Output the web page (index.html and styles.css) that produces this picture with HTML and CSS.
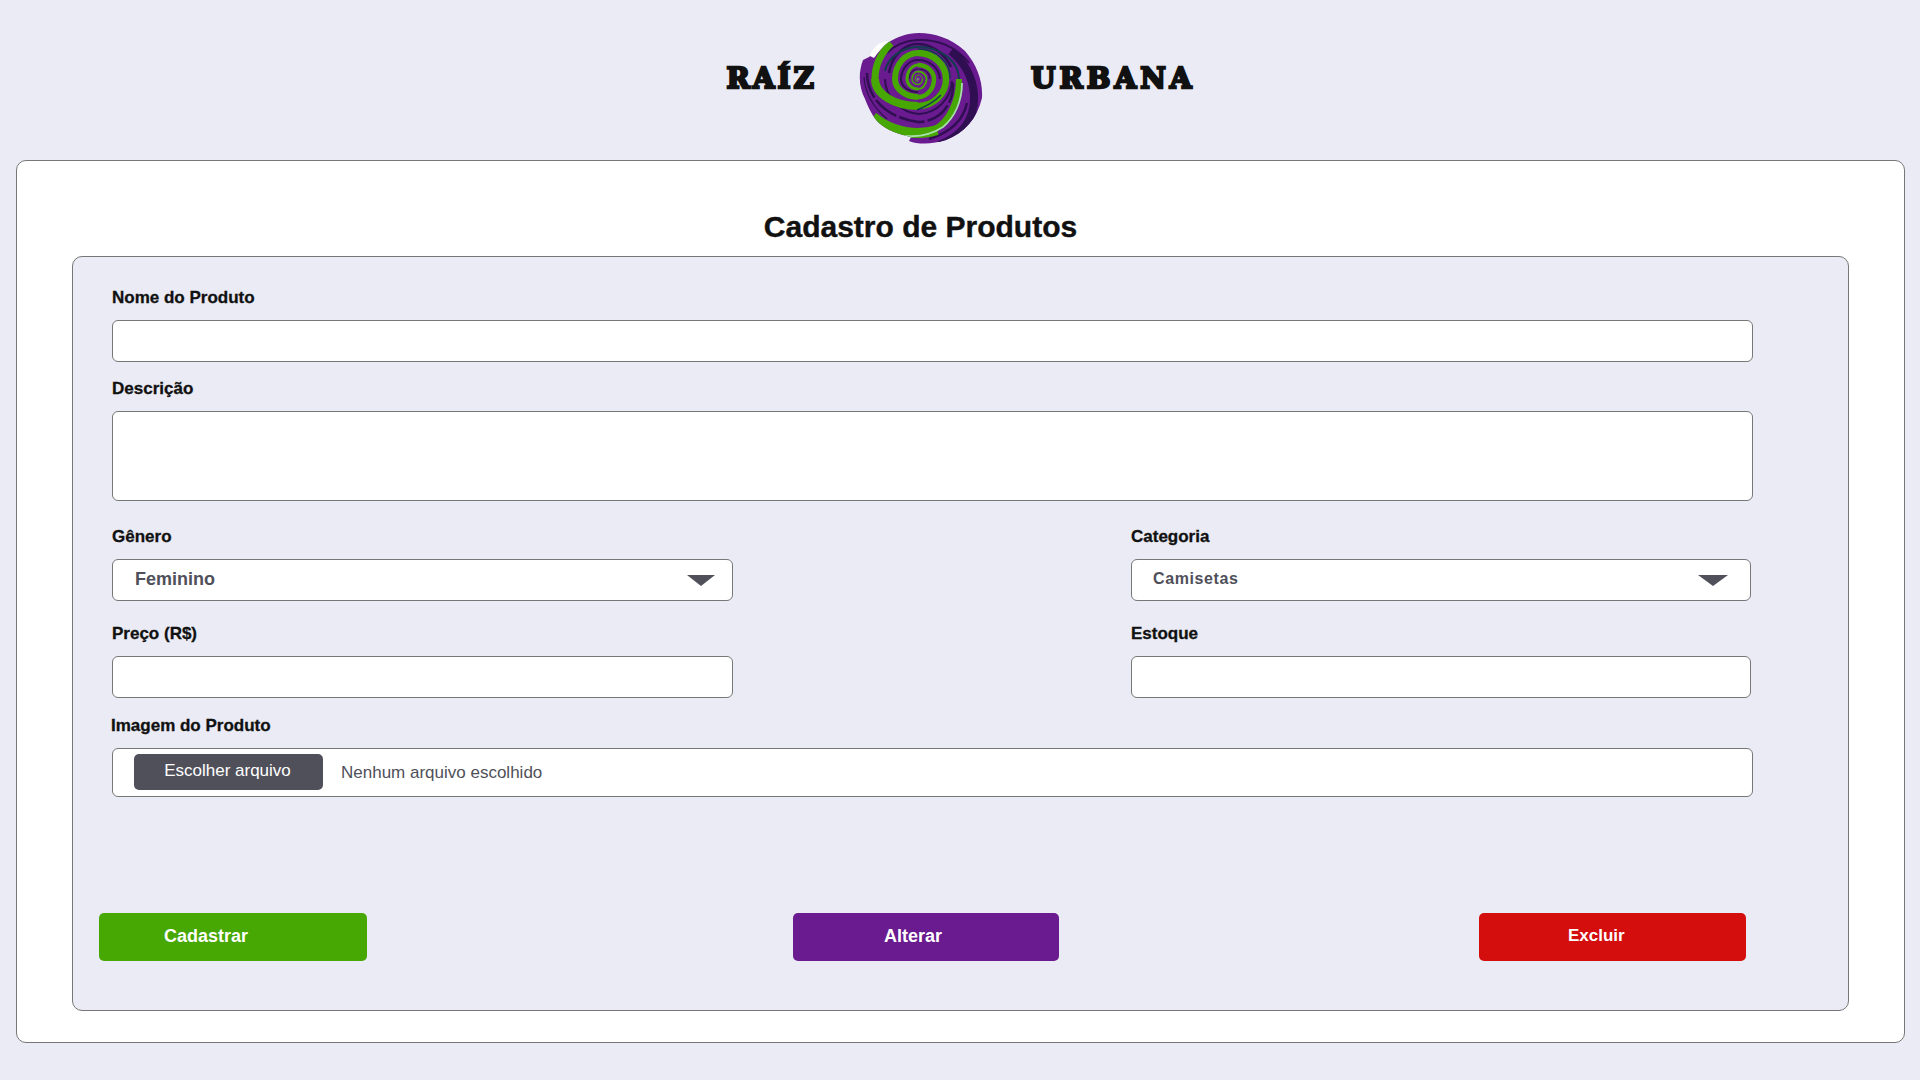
FILE: index.html
```html
<!DOCTYPE html>
<html lang="pt-BR">
<head>
    <meta charset="UTF-8">
    <title>Cadastro de Produtos</title>
    <link rel="stylesheet" href="styles.css">
</head>
<body>
    <header class="brand">
        <span class="brand-name">RAÍZ</span>
        <svg class="brand-logo" viewBox="0 0 124 112" width="124" height="112">
            <defs>
                <clipPath id="logoShape">
                    <path d="M4 27C-1 40 0 55 6 66C10 76 14 84 20 90C28 97 38 101 52 104L50 108C60 112 75 111 87 107C105 100 118 86 123 65C124 48 118 32 106 18C92 5 75 0 60 0C48 0 38 4 30 9L10 24Z"/>
                </clipPath>
            </defs>
            <g clip-path="url(#logoShape)" fill="none">
                <rect width="124" height="112" fill="#6a1b8f"/>
                <!-- dark streaks -->
                <g stroke="#2f0f52">
                    <path d="M80 112C106 102 116 84 115 62C114 46 106 30 92 18" stroke-width="8"/>
                    <path d="M70 106C90 100 104 88 108 70" stroke-width="2.5"/>
                    <path d="M110 30C96 12 76 6 58 7C44 8 34 14 28 20" stroke-width="2"/>
                    <path d="M92 34C84 18 70 10 56 11C42 13 32 26 30 40" stroke-width="2.5"/>
                    <path d="M8 40C8 62 24 84 59 89C80 89 95 72 94 50" stroke-width="2.5" stroke-dasharray="26 3"/>
                    <path d="M5 44C6 60 14 74 28 86" stroke-width="1.2"/>
                    <path d="M26 46C26 64 42 80 60 81C78 80 92 66 93 48" stroke-width="2"/>
                    <path d="M81 46A22 20 0 0 0 59 27A17 20 0 0 0 42 46A17 13 0 0 0 59 59" stroke-width="2"/>
                    <path d="M70 46A11 8 0 0 0 59 36A9 10 0 0 0 50 46" stroke-width="1.2"/>
                </g>
                <!-- outer green arm -->
                <path d="M14 84C24 92 40 100 59 100C66 100 72 99 78 97" stroke="#47a703" stroke-width="10"/>
                <path d="M74 97C90 90 100 68 100 46" stroke="#47a703" stroke-width="6"/>
                <path d="M22 96C40 106 66 106 84 94C96 84 103 68 103 50" stroke="#a6dfa8" stroke-width="1.8"/>
                <path d="M100 46A41 32 0 0 0 59 14A34 30 0 0 0 26 38" stroke="#123c4e" stroke-width="2"/>
                <!-- main green arm, thinner on the way in -->
                <g stroke="#47a703">
                    <path d="M32 10C22 20 16 32 16 46" stroke-width="7"/>
                    <path d="M16 46A43 27 0 0 0 59 73" stroke-width="8"/>
                    <path d="M59 73A28 27 0 0 0 87 46A28 26 0 0 0 59 20" stroke-width="6.5"/>
                    <path d="M59 20A23 26 0 0 0 36 46A23 18 0 0 0 59 64" stroke-width="6"/>
                    <path d="M59 64A16 18 0 0 0 75 46A16 14 0 0 0 59 32" stroke-width="4.5"/>
                    <path d="M59 32A11 14 0 0 0 48 46A11 10 0 0 0 59 56" stroke-width="3"/>
                    <path d="M59 56A8.5 10 0 0 0 67.5 46A8.5 7.5 0 0 0 59 38.5" stroke-width="2"/>
                    <path d="M59 38.5A6 7.5 0 0 0 53 46A6 5.5 0 0 0 59 51.5A4.5 5.5 0 0 0 63.5 46" stroke-width="1.4"/>
                    <path d="M63.5 46A4.5 4 0 0 0 59 42A3 4 0 0 0 56 46A3 2.5 0 0 0 59 48.5" stroke-width="1"/>
                </g>
                <path d="M91 46A32 28 0 0 0 59 16M82 62C74 70 66 74 58 77" stroke="#123c4e" stroke-width="1.4"/>
                <circle cx="59" cy="46" r="1.6" fill="#7a7a7a"/>
            </g>
            <path d="M11 23C13 15 20 9 29 8C25 13 20 18 15 25Z" fill="#ffffff"/>
        </svg>
        <span class="brand-name brand-name-wide">URBANA</span>
    </header>

    <main class="panel">
        <h1 class="panel-title">Cadastro de Produtos</h1>
        <form class="product-form">
            <label class="field-label" for="nome">Nome do Produto</label>
            <input class="field-input" id="nome" type="text">

            <label class="field-label label-desc" for="descricao">Descrição</label>
            <textarea class="field-input field-area" id="descricao"></textarea>

            <div class="two-cols">
                <div>
                    <label class="field-label" for="genero">Gênero</label>
                    <div class="select-wrap">
                        <select class="field-input field-select select-genero" id="genero">
                            <option>Feminino</option>
                            <option>Masculino</option>
                        </select>
                    </div>
                </div>
                <div>
                    <label class="field-label" for="categoria">Categoria</label>
                    <div class="select-wrap select-wrap-wide">
                        <select class="field-input field-select select-categoria" id="categoria">
                            <option>Camisetas</option>
                            <option>Calças</option>
                        </select>
                    </div>
                </div>
                <div>
                    <label class="field-label" for="preco">Preço (R$)</label>
                    <input class="field-input" id="preco" type="text">
                </div>
                <div>
                    <label class="field-label" for="estoque">Estoque</label>
                    <input class="field-input" id="estoque" type="text">
                </div>
            </div>

            <label class="field-label label-image">Imagem do Produto</label>
            <div class="file-box">
                <button class="file-button" type="button">Escolher arquivo</button>
                <span class="file-name">Nenhum arquivo escolhido</span>
            </div>

            <div class="actions">
                <button class="btn btn-add" type="button">Cadastrar</button>
                <button class="btn btn-edit" type="button">Alterar</button>
                <button class="btn btn-delete" type="button">Excluir</button>
            </div>
        </form>
    </main>
</body>
</html>
```

FILE: styles.css
```css
* {
    box-sizing: border-box;
}

body {
    margin: 0;
    height: 1080px;
    overflow: hidden;
    background: #eaebf4;
    color: #111;
    font-family: "Liberation Sans", Arial, sans-serif;
}

/* Header */
.brand {
    display: flex;
    justify-content: center;
    gap: 44px;
    height: 160px;
    padding-top: 33px;
    padding-left: 2px;
}
.brand-name {
    margin-top: 24px;
    font-family: "DejaVu Serif", serif;
    font-size: 28px;
    font-weight: bold;
    line-height: 44px;
    letter-spacing: 3px;
    color: #111;
    -webkit-text-stroke: 2.4px #111;
}
.brand-name-wide {
    letter-spacing: 4px;
}
.brand-logo {
    display: block;
    margin: 0 4px 0 -2px;
}

/* Cards */
.panel {
    height: 883px;
    margin: 0 15px 0 16px;
    padding: 42px 55px 0;
    background: #fff;
    border: 1px solid #777;
    border-radius: 10px;
}
.panel-title {
    margin: 0 80px 5px 0;
    font-size: 30px;
    line-height: 48px;
    text-align: center;
    -webkit-text-stroke: 0.4px #111;
}
.product-form {
    height: 755px;
    padding: 30px 95px 0 39px;
    background: #eaebf4;
    border: 1px solid #777;
    border-radius: 10px;
}

/* Fields */
.field-label {
    display: block;
    font-size: 17px;
    font-weight: bold;
    line-height: 22px;
    margin-bottom: 11px;
    -webkit-text-stroke: 0.3px #111;
}
.label-desc {
    margin-top: 16px;
}
.label-image {
    margin-top: 17px;
    margin-left: -1px;
    margin-bottom: 11px;
}
.field-input {
    display: block;
    width: 100%;
    height: 42px;
    padding: 0 22px;
    background: #fff;
    border: 1px solid #777;
    border-radius: 6px;
    color: #50505a;
    font-family: inherit;
}
.field-area {
    height: 90px;
    resize: none;
}
.two-cols {
    display: grid;
    grid-template-columns: 621px 620px;
    justify-content: space-between;
    row-gap: 22px;
    margin-top: 25px;
    padding-right: 2px;
}
.select-wrap {
    position: relative;
}
.select-wrap::after {
    content: "";
    position: absolute;
    top: 16px;
    right: 18px;
    border-style: solid;
    border-width: 11px 14px 0;
    border-color: #50505a transparent transparent;
}
.select-wrap-wide::after {
    right: 23px;
    border-width: 11px 15px 0;
}
.field-select {
    appearance: none;
    padding-bottom: 2px;
}
.select-genero {
    font-size: 18px;
    font-weight: bold;
}
.select-categoria {
    padding-left: 21px;
    padding-bottom: 3px;
    font-size: 16px;
    font-weight: bold;
    letter-spacing: 0.6px;
}

/* File picker */
.file-box {
    display: flex;
    align-items: center;
    gap: 18px;
    height: 49px;
    padding-left: 21px;
    padding-bottom: 2px;
    background: #fff;
    border: 1px solid #777;
    border-radius: 6px;
}
.file-button {
    width: 189px;
    height: 36px;
    padding: 0 2px 2px 0;
    background: #50505a;
    border: none;
    border-radius: 5px;
    color: #fff;
    font-family: inherit;
    font-size: 17px;
}
.file-name {
    margin-top: 2px;
    font-size: 17px;
    color: #50505a;
}

/* Buttons */
.actions {
    display: flex;
    margin-top: 116px;
    margin-left: -13px;
}
.btn {
    height: 48px;
    padding: 0 0 2px;
    border: none;
    border-radius: 5px;
    color: #fff;
    font-family: inherit;
    font-size: 18px;
    font-weight: bold;
    text-align: left;
}
.btn-add {
    width: 268px;
    padding-left: 65px;
    background: #47a703;
}
.btn-edit {
    width: 266px;
    margin-left: 426px;
    padding-left: 91px;
    background: #6a1b8f;
}
.btn-delete {
    width: 267px;
    margin-left: 420px;
    padding-left: 89px;
    background: #d40e0c;
    font-size: 17px;
}
```
